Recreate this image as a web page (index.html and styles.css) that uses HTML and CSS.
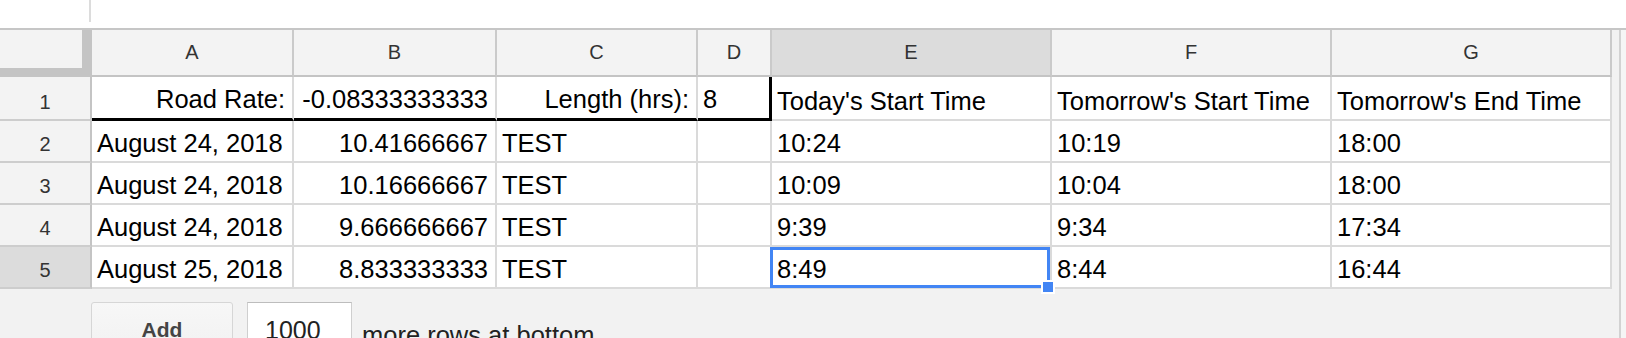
FILE: index.html
```html
<!DOCTYPE html>
<html lang="en">

<head>
    <meta charset="UTF-8">
    <meta name="viewport" content="width=device-width, initial-scale=1.0">
    <title>Road Rate</title>
    <link rel="stylesheet" href="styles.css">
</head>

<body>
    <div class="toolbar">
        <span class="toolbar-divider"></span>
    </div>

    <div class="sheet">
        <div class="grid-area">
            <div class="grid">
                <!-- column headers -->
                <div class="corner"></div>
                <div class="col-head">A</div>
                <div class="col-head">B</div>
                <div class="col-head">C</div>
                <div class="col-head">D</div>
                <div class="col-head active">E</div>
                <div class="col-head">F</div>
                <div class="col-head">G</div>

                <!-- row 1: settings -->
                <div class="row-head">1</div>
                <div class="cell num rule-bottom">Road Rate:</div>
                <div class="cell num rule-bottom">-0.08333333333</div>
                <div class="cell num rule-bottom">Length (hrs):</div>
                <div class="cell rule-bottom rule-right">8</div>
                <div class="cell">Today's Start Time</div>
                <div class="cell">Tomorrow's Start Time</div>
                <div class="cell">Tomorrow's End Time</div>

                <div class="row-head">2</div>
                <div class="cell">August 24, 2018</div>
                <div class="cell num">10.41666667</div>
                <div class="cell">TEST</div>
                <div class="cell"></div>
                <div class="cell">10:24</div>
                <div class="cell">10:19</div>
                <div class="cell">18:00</div>

                <div class="row-head">3</div>
                <div class="cell">August 24, 2018</div>
                <div class="cell num">10.16666667</div>
                <div class="cell">TEST</div>
                <div class="cell"></div>
                <div class="cell">10:09</div>
                <div class="cell">10:04</div>
                <div class="cell">18:00</div>

                <div class="row-head">4</div>
                <div class="cell">August 24, 2018</div>
                <div class="cell num">9.666666667</div>
                <div class="cell">TEST</div>
                <div class="cell"></div>
                <div class="cell">9:39</div>
                <div class="cell">9:34</div>
                <div class="cell">17:34</div>

                <div class="row-head active">5</div>
                <div class="cell">August 25, 2018</div>
                <div class="cell num">8.833333333</div>
                <div class="cell">TEST</div>
                <div class="cell"></div>
                <div class="cell selected">8:49<span class="fill-handle"></span></div>
                <div class="cell">8:44</div>
                <div class="cell">16:44</div>
            </div>

            <div class="add-rows">
                <button class="add-btn">Add</button>
                <input class="row-count" type="text" value="1000">
                <span class="add-label">more rows at bottom.</span>
            </div>
        </div>
        <div class="scroll-track"></div>
    </div>
</body>

</html>
```

FILE: styles.css
```css
/* Spreadsheet grid */
* {
    box-sizing: border-box;
}

body {
    font-family: "Liberation Sans", Arial, sans-serif;
    background: #fff;
    margin: 0;
    padding: 0;
    overflow: hidden;
}

.toolbar {
    height: 28px;
    background: #fff;
}

.toolbar-divider {
    display: block;
    margin-left: 89px;
    width: 2px;
    height: 22px;
    background: #dcdcdc;
}

.sheet {
    display: flex;
    height: 310px;
    background: #f2f2f2;
    border-top: 2px solid #c6c6c6;
}

.grid-area {
    flex: 0 0 1619px;
}

.scroll-track {
    flex: 1;
    background: #f5f5f5;
    border-left: 2px solid #d2d2d2;
}

.grid {
    display: grid;
    grid-template-columns: 92px 202px 203px 201px 74px 280px 280px 280px;
    grid-template-rows: 47px 44px repeat(4, 42px);
    width: 1612px;
}

/* frozen-pane corner */
.corner {
    background: #f3f3f3;
    border-right: 10px solid #c4c4c4;
    border-bottom: 9px solid #c4c4c4;
}

.col-head {
    display: flex;
    align-items: center;
    justify-content: center;
    background: #f3f3f3;
    border-right: 2px solid #cacaca;
    border-bottom: 2px solid #c4c4c4;
    font-size: 20px;
    color: #333;
}

.row-head {
    display: flex;
    align-items: flex-end;
    justify-content: center;
    padding-bottom: 2px;
    background: #f3f3f3;
    border-right: 2px solid #c4c4c4;
    border-bottom: 2px solid #cdcdcd;
    font-size: 20px;
    line-height: 30px;
    color: #333;
}

.col-head.active,
.row-head.active {
    background: #dcdcdc;
}

.cell {
    display: flex;
    align-items: flex-end;
    padding: 0 6px 3px 5px;
    background: #fff;
    border-right: 2px solid #dadada;
    border-bottom: 2px solid #dadada;
    font-size: 25.5px;
    line-height: 30px;
    color: #000;
    white-space: nowrap;
}

.cell.num {
    justify-content: flex-end;
    padding-right: 7px;
}

.cell.rule-bottom {
    border-bottom: 3px solid #000;
    padding-bottom: 4px;
}

.cell.rule-right {
    border-right: 3px solid #000;
}

/* active cell */
.cell.selected {
    position: relative;
}

.cell.selected::after {
    content: "";
    position: absolute;
    left: -2px;
    top: 0;
    right: 0;
    bottom: -1px;
    border: 3px solid #4285f4;
}

.fill-handle {
    position: absolute;
    right: -5px;
    bottom: -7px;
    width: 14px;
    height: 14px;
    background: #4285f4;
    border: 2px solid #fff;
    z-index: 2;
}

/* add rows bar */
.add-rows {
    display: flex;
    align-items: flex-start;
    padding: 13px 0 0 91px;
}

.add-btn {
    width: 142px;
    height: 56px;
    padding: 0;
    border: 1px solid #d6d6d6;
    border-radius: 3px;
    background: linear-gradient(#f7f7f7, #f1f1f1);
    font-family: "Liberation Sans", Arial, sans-serif;
    font-size: 21px;
    font-weight: 700;
    color: #444;
}

.row-count {
    width: 105px;
    height: 56px;
    margin-left: 14px;
    padding: 0 0 0 17px;
    border: 1px solid #cfcfcf;
    border-top-color: #bdbdbd;
    border-radius: 0;
    background: #fff;
    font-family: "Liberation Sans", Arial, sans-serif;
    font-size: 25px;
    color: #222;
}

.add-label {
    margin: 19px 0 0 10px;
    font-size: 25.5px;
    color: #222;
}
```
